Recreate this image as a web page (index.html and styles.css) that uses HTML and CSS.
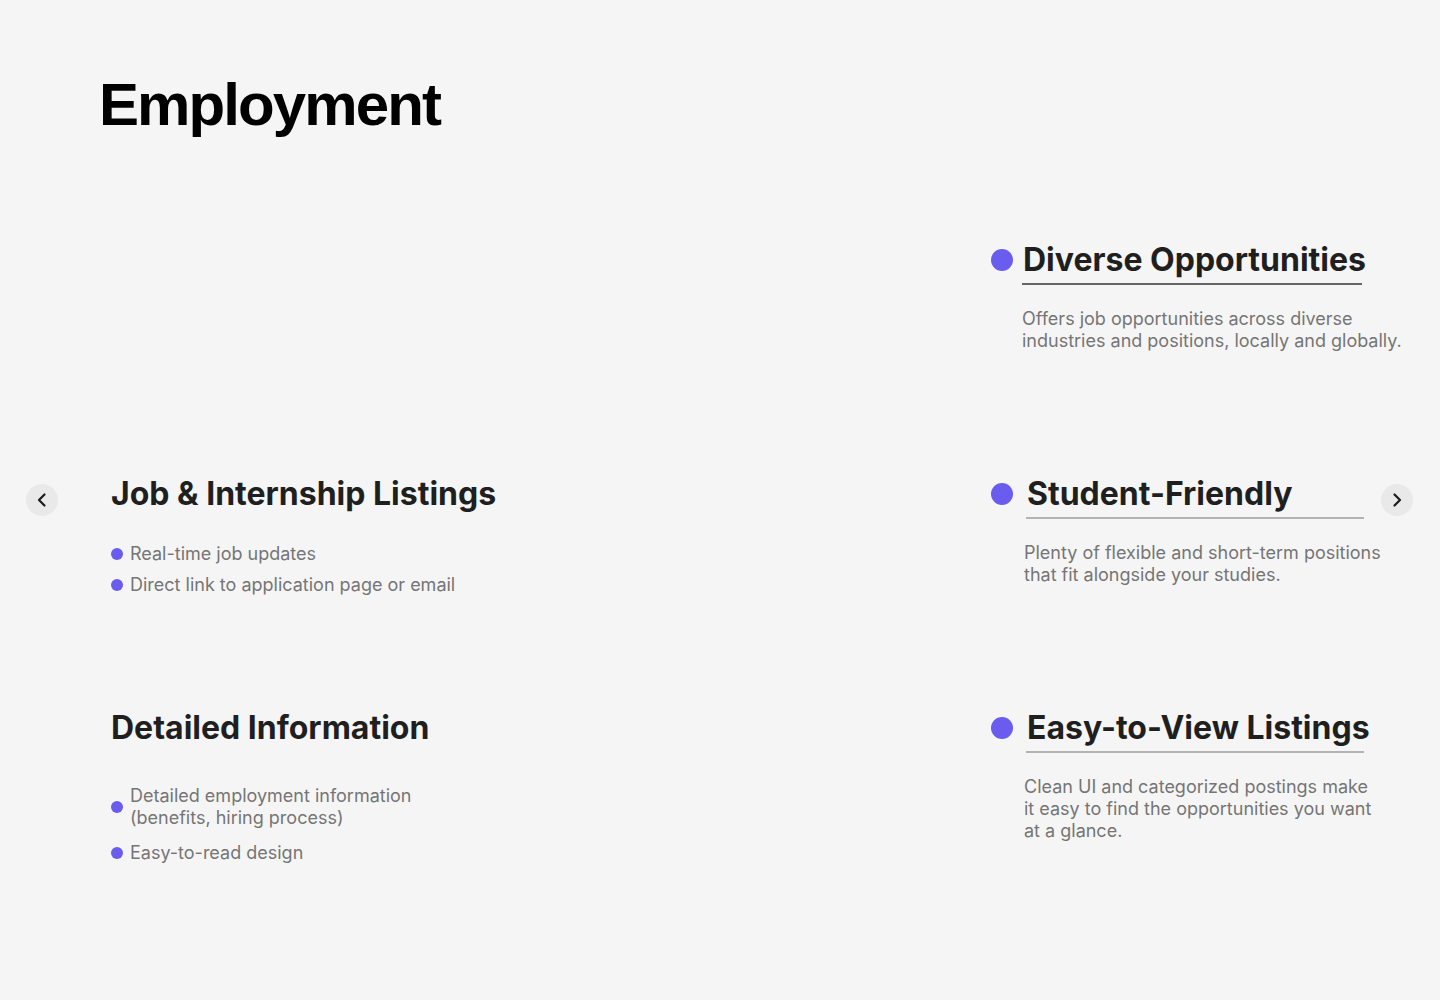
FILE: index.html
```html
<!DOCTYPE html>
<html lang="en">
<head>
<meta charset="utf-8">
<title>Employment</title>
<link rel="stylesheet" href="styles.css">
</head>
<body>
<main class="page">
  <h1 class="title">Employment</h1>
  <section class="carousel">
    <button class="nav nav-prev" aria-label="Previous">
      <svg width="18" height="18" viewBox="0 0 18 18" fill="none"><path d="M11.5 3.5 L6 9 L11.5 14.5" stroke="#1a1a1a" stroke-width="2.2" stroke-linecap="round" stroke-linejoin="round"/></svg>
    </button>

    <div class="cell left r2">
      <h2 class="feat-title">Job &amp; Internship Listings</h2>
      <ul class="bullets">
        <li>Real-time job updates</li>
        <li>Direct link to application page or email</li>
      </ul>
    </div>

    <div class="cell left r3">
      <h2 class="feat-title">Detailed Information</h2>
      <ul class="bullets bullets-wide">
        <li>Detailed employment information<br>(benefits, hiring process)</li>
        <li>Easy-to-read design</li>
      </ul>
    </div>

    <div class="cell right r1">
      <div class="head">
        <span class="dot"></span>
        <h2 class="feat-title tight">Diverse Opportunities</h2>
      </div>
      <div class="rule rule-dark"></div>
      <p class="desc desc-wide">Offers job opportunities across diverse industries and positions, locally and globally.</p>
    </div>

    <div class="cell right r2">
      <div class="head">
        <span class="dot"></span>
        <h2 class="feat-title">Student-Friendly</h2>
      </div>
      <div class="rule"></div>
      <p class="desc">Plenty of flexible and short-term positions that fit alongside your studies.</p>
    </div>

    <div class="cell right r3">
      <div class="head">
        <span class="dot"></span>
        <h2 class="feat-title">Easy-to-View Listings</h2>
      </div>
      <div class="rule"></div>
      <p class="desc">Clean UI and categorized postings make it easy to find the opportunities you want at a glance.</p>
    </div>

    <button class="nav nav-next" aria-label="Next">
      <svg width="18" height="18" viewBox="0 0 18 18" fill="none"><path d="M6.5 3.5 L12 9 L6.5 14.5" stroke="#1a1a1a" stroke-width="2.2" stroke-linecap="round" stroke-linejoin="round"/></svg>
    </button>
  </section>
</main>
</body>
</html>
```

FILE: styles.css
```css
* { box-sizing: border-box; }

html, body {
  margin: 0;
  padding: 0;
  background: #f5f5f5;
}

body {
  font-family: Inter, "Noto Sans", sans-serif;
  color: #1f1f1f;
  width: 1440px;
  height: 1000px;
  overflow: hidden;
}

.page {
  padding-top: 75px;
}

.title {
  margin: 0 0 0 99px;
  font-family: "Liberation Sans", Arial, sans-serif;
  font-weight: 700;
  font-size: 60px;
  line-height: 60px;
  color: #000;
  letter-spacing: -1.9px;
}

.carousel {
  margin-top: 105px;
  padding: 0 27px 0 26px;
  display: grid;
  grid-template-columns: 32px 933px 390px 32px;
  grid-template-rows: 234px 234px 234px;
}

.cell { align-self: start; }
.r1 { grid-row: 1; }
.r2 { grid-row: 2; }
.r3 { grid-row: 3; }
.left { grid-column: 2; padding-left: 53px; }
.right { grid-column: 3; }

.nav {
  grid-row: 2;
  align-self: start;
  margin-top: 10px;
  width: 32px;
  height: 32px;
  border: 0;
  border-radius: 50%;
  background: #e9e9e9;
  padding: 0;
  display: flex;
  align-items: center;
  justify-content: center;
  cursor: pointer;
}
.nav-prev { grid-column: 1; }
.nav-next { grid-column: 4; }

.feat-title {
  margin: 0;
  font-size: 32px;
  line-height: 40px;
  font-weight: 700;
  color: #1f1f1f;
  letter-spacing: 0;
  white-space: nowrap;
}

.head {
  display: flex;
  align-items: center;
  gap: 14px;
}
.head .tight { margin-left: -4px; }

.dot {
  width: 22px;
  height: 22px;
  border-radius: 50%;
  background: #6a5cef;
  flex: none;
}

.rule {
  width: 338px;
  height: 2px;
  margin: 3px 0 0 35px;
  background: #b3b3b3;
}
.rule-dark {
  background: #666;
  margin-left: 31px;
  width: 340px;
}

.desc {
  margin: 23px 0 0 33px;
  font-size: 18px;
  line-height: 22px;
  color: #757575;
  max-width: 362px;
}
.desc-wide {
  margin-left: 31px;
  width: 390px;
  max-width: 390px;
}

.bullets {
  list-style: none;
  margin: 29px 0 0 0;
  padding: 0;
}
.bullets li {
  position: relative;
  padding-left: 19px;
  font-size: 18px;
  line-height: 22px;
  color: #757575;
  margin-bottom: 9px;
  display: flex;
  align-items: center;
}
.bullets li::before {
  content: "";
  position: absolute;
  left: 0;
  top: 50%;
  margin-top: -6px;
  width: 12px;
  height: 12px;
  border-radius: 50%;
  background: #6a5cef;
}
.bullets-wide { margin-top: 37px; }
.bullets-wide li { margin-bottom: 13px; }
```
